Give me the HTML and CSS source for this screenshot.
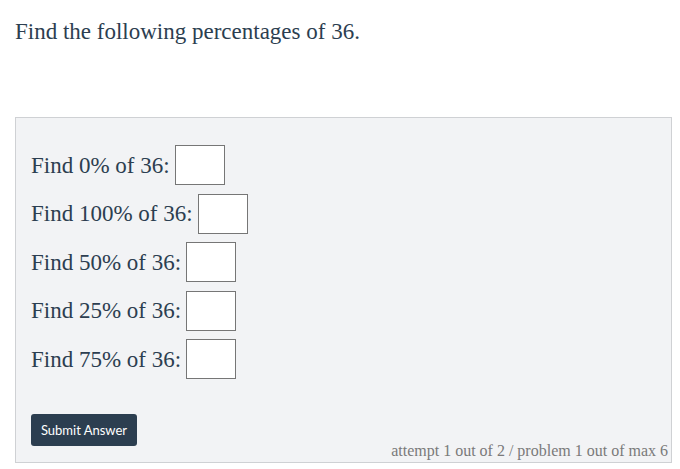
FILE: index.html
```html
<!DOCTYPE html>
<html>
<head>
<meta charset="utf-8">
<link rel="stylesheet" href="styles.css">
</head>
<body>
<p class="intro">Find the following percentages of 36.</p>
<div class="problem">
  <div class="rows">
    <div class="row"><span class="label">Find 0% of 36:</span><input class="answer" type="text"></div>
    <div class="row"><span class="label">Find 100% of 36:</span><input class="answer" type="text"></div>
    <div class="row"><span class="label">Find 50% of 36:</span><input class="answer" type="text"></div>
    <div class="row"><span class="label">Find 25% of 36:</span><input class="answer" type="text"></div>
    <div class="row"><span class="label">Find 75% of 36:</span><input class="answer" type="text"></div>
  </div>
  <div class="bottom">
    <button class="submit">Submit Answer</button>
    <span class="status">attempt 1 out of 2 / problem 1 out of max 6</span>
  </div>
</div>
</body>
</html>
```
FILE: styles.css
```css
html, body {
  margin: 0;
  padding: 0;
  background: #ffffff;
}
body {
  padding: 0 8px 0 15px;
  font-family: "Liberation Serif", "DejaVu Serif", serif;
  color: #2c3e50;
  font-variant-numeric: oldstyle-nums;
}
.intro {
  margin: 0;
  padding-top: 18px;
  height: 117px;
  box-sizing: border-box;
  font-size: 23px;
  line-height: 28px;
}
.problem {
  background: #f2f3f5;
  border: 1px solid #cfd1d4;
  height: 346px;
  box-sizing: border-box;
  padding: 27px 3px 0 15px;
  display: flex;
  flex-direction: column;
}
.rows {
  display: flex;
  flex-direction: column;
  gap: 8.5px;
}
.row {
  display: flex;
  align-items: center;
  height: 40px;
  gap: 5px;
}
.label {
  font-size: 23px;
  line-height: 28px;
  padding-top: 1px;
}
.answer {
  width: 50px;
  height: 40px;
  box-sizing: border-box;
  border: 1px solid #767676;
  background: #ffffff;
  margin: 0;
  padding: 0;
}
.bottom {
  display: flex;
  justify-content: space-between;
  align-items: flex-end;
  margin-top: 35px;
}
.submit {
  width: 106px;
  height: 32px;
  background: #2c3e50;
  color: #ffffff;
  border: none;
  border-radius: 3px;
  font-family: Lato, "Liberation Sans", sans-serif;
  font-size: 13px;
  padding: 0;
  margin: 0;
}
.status {
  font-size: 16px;
  line-height: 20px;
  color: #7a7a7a;
  margin-bottom: -15px;
}
```
